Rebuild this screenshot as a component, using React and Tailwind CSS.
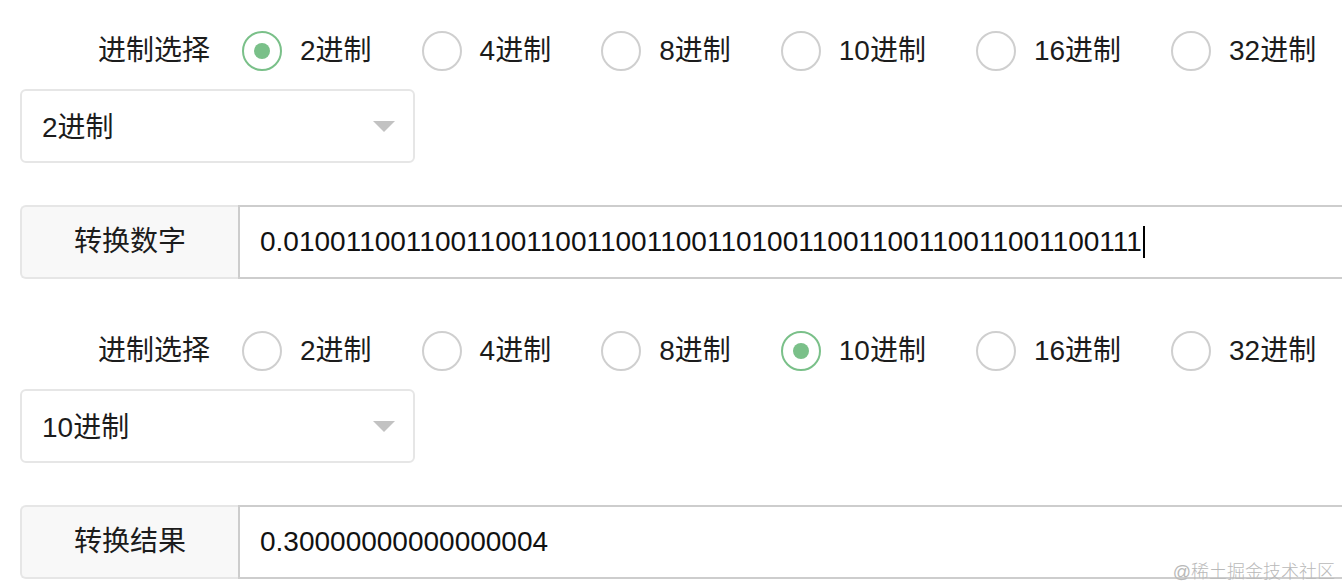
import { useState } from 'react'

const BASES = [2, 4, 8, 10, 16, 32]
const FONT = { fontFamily: '"Liberation Sans", "Noto Sans CJK SC", sans-serif' }

const BINARY = '0.01' + '0011'.repeat(7) + '01' + '0011'.repeat(6) + '1'

function Radio({ label, checked, onClick }) {
  return (
    <button onClick={onClick} className="flex items-center mr-[50px] shrink-0">
      <span
        className={`w-[40px] h-[40px] rounded-full border-[2.5px] flex items-center justify-center bg-white
          ${checked ? 'border-[#7ac089]' : 'border-[#cfcfcf]'}`}
      >
        {checked && <span className="w-[16px] h-[16px] rounded-full bg-[#7ac089]" />}
      </span>
      <span className="ml-[18px] text-[28px] leading-[40px] text-[#1c1c1c] whitespace-nowrap">{label}</span>
    </button>
  )
}

function Section({ base, setBase, title, value, caret }) {
  return (
    <div className="pt-[30px] pb-[21px]">
      {/* base picker */}
      <div className="flex items-center h-[40px] pt-[2px]">
        <div className="w-[190px] mr-[32px] text-right text-[28px] leading-[40px] text-[#1c1c1c] shrink-0">进制选择</div>
        {BASES.map(b => (
          <Radio key={b} label={`${b}进制`} checked={base === b} onClick={() => setBase(b)} />
        ))}
      </div>

      {/* select */}
      <div className="mt-[19px] w-[395px] h-[74px] border-2 border-[#e6e6e6] rounded-[6px] flex items-center justify-between pl-[20px] pr-[18px]">
        <span className="text-[28px] text-[#1c1c1c] pt-[3px]">{base}进制</span>
        <span className="w-0 h-0 border-l-[11px] border-r-[11px] border-t-[11px] border-l-transparent border-r-transparent border-t-[#c2c2c2]" />
      </div>

      {/* input group */}
      <div className="mt-[42px] w-[1330px] h-[74px] flex">
        <div className="w-[218px] h-full bg-[#f8f8f8] border-2 border-r-0 border-[#e6e6e6] rounded-l-[6px] flex items-center justify-center text-[28px] text-[#1c1c1c] shrink-0">
          {title}
        </div>
        <div className="flex-1 h-full border-2 border-[#cdcdcd] flex items-center pl-[20px] text-[28px] text-[#111]">
          <span className="whitespace-nowrap">{value}</span>
          {caret && <span className="w-[2px] h-[32px] bg-black ml-[1px]" />}
        </div>
      </div>
    </div>
  )
}

export default function App() {
  const [from, setFrom] = useState(2)
  const [to, setTo] = useState(10)

  return (
    <div className="relative w-[1342px] h-[586px] overflow-hidden bg-white pl-[20px]" style={FONT}>
      <Section base={from} setBase={setFrom} title="转换数字" value={BINARY} caret />
      <Section base={to} setBase={setTo} title="转换结果" value="0.30000000000000004" />

      {/* watermark */}
      <div className="absolute right-[7px] bottom-[5px] text-[18px] leading-none font-light text-[#b9b9b9]">
        @稀土掘金技术社区
      </div>
    </div>
  )
}
